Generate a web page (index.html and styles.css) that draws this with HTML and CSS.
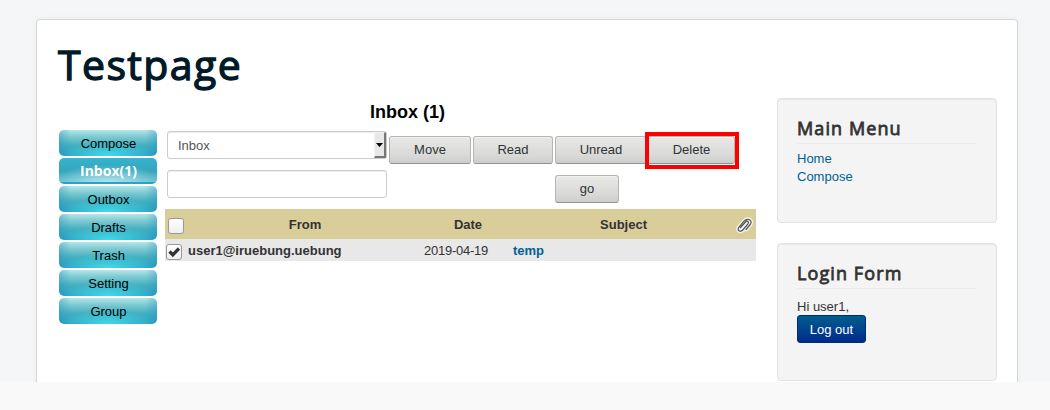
FILE: index.html
```html
<!DOCTYPE html>
<html lang="en">
<head>
<meta charset="utf-8">
<title>Testpage</title>
<link rel="stylesheet" href="styles.css">
</head>
<body>
<div class="viewport">
  <div class="page">
    <h1 class="site-title">Testpage</h1>
    <div class="columns">
      <nav class="folders">
        <a class="folder">Compose</a>
        <a class="folder active">Inbox(1)</a>
        <a class="folder">Outbox</a>
        <a class="folder">Drafts</a>
        <a class="folder">Trash</a>
        <a class="folder">Setting</a>
        <a class="folder">Group</a>
      </nav>
      <main class="mail">
        <h2 class="mail-title">Inbox (1)</h2>
        <div class="toolbar">
          <div class="select">Inbox<span class="arrow"><svg width="7" height="4" viewBox="0 0 7 4"><path d="M0 0h7L3.5 4z"/></svg></span></div>
          <div class="btn move">Move</div>
          <div class="btn read">Read</div>
          <div class="btn unread">Unread</div>
          <div class="btn delete">Delete<span class="marker"></span></div>
        </div>
        <div class="search">
          <div class="input"></div>
          <div class="btn go">go</div>
        </div>
        <div class="row head">
          <span class="check"></span>
          <span class="from">From</span>
          <span class="date">Date</span>
          <span class="subject">Subject</span>
          <svg class="clip" width="19" height="17" viewBox="0 0 19 17" fill="none" stroke-linecap="round" stroke-linejoin="round">
            <path stroke="#f6f4f0" stroke-width="4" d="M5.500 10.500L10.500 5c1.500-1.700 4-.2 2.500 1.800L7.800 13c-2.500 2.500-6.300.3-4-2.700L9 4.200c3.500-3.800 9.300-1.200 6.200 3.300L11 12.500"/>
            <path stroke="#505050" stroke-width="1.200" d="M5.500 10.500L10.500 5c1.500-1.700 4-.2 2.500 1.800L7.800 13c-2.500 2.500-6.300.3-4-2.700L9 4.200c3.500-3.800 9.300-1.200 6.200 3.300L11 12.500"/>
          </svg>
        </div>
        <div class="row item">
          <span class="check"><svg width="14" height="14" viewBox="0 0 14 14"><path d="M2.500 6.500L5.800 9.800L12 3.500" fill="none" stroke="#2e3436" stroke-width="3.300"/></svg></span>
          <span class="from">user1@iruebung.uebung</span>
          <span class="date">2019-04-19</span>
          <a class="subject">temp</a>
        </div>
      </main>
      <aside class="side">
        <section class="well menu">
          <h3>Main Menu</h3>
          <a>Home</a>
          <a>Compose</a>
        </section>
        <section class="well login">
          <h3>Login Form</h3>
          <p>Hi user1,</p>
          <div class="logout">Log out</div>
        </section>
      </aside>
    </div>
  </div>
</div>
</body>
</html>
```
FILE: styles.css
```css
* { box-sizing: border-box; }
body {
  margin: 0;
  background: #f9f9f9;
  color: #333;
  font: 13px/18px "Liberation Sans", Arial, sans-serif;
}
h1, h2, h3, p { margin: 0; }
.viewport {
  height: 382px;
  overflow: hidden;
  padding: 19px 32px 0 36px;
  background: #f4f6f8;
}
.page {
  height: 400px;
  padding: 20px;
  background: #fff;
  border: 1px solid #d5d7d9;
  border-radius: 4px;
  box-shadow: 0 0 6px rgba(0, 0, 0, .05);
}
.site-title {
  height: 58px;
  padding-left: 1px;
  font: 400 41px/49px "Open Sans", sans-serif;
  letter-spacing: 1.4px;
  -webkit-text-stroke: 1.3px #001a27;
  color: #001a27;
}
.columns { display: flex; }
.folders {
  width: 98px;
  margin: 32px 8px 0 2px;
  display: flex;
  flex-direction: column;
  gap: 2px;
}
.folder {
  height: 26px;
  padding-left: 1px;
  line-height: 27px;
  text-align: center;
  color: #000;
  border-radius: 5px;
  background:
    radial-gradient(ellipse 48px 14px at 50% 100%, rgba(67, 225, 235, .9), rgba(60, 200, 225, 0)),
    linear-gradient(90deg, rgba(30, 140, 190, .35), transparent 12%, transparent 88%, rgba(30, 140, 190, .35)),
    linear-gradient(#b5e6e8 0, #79c8d0 28%, #45b0c0 58%, #2aa0c4 100%);
}
.folder.active {
  color: #fff;
  font: bold 14px/25px "Open Sans", sans-serif;
  background:
    linear-gradient(transparent 94%, #28a4c2 94%),
    radial-gradient(ellipse 62px 19px at 50% 100%, rgba(190, 235, 238, .95), rgba(100, 200, 215, 0)),
    linear-gradient(#36b4cc, #35a5bd 50%, #60bdcd);
}
.mail { width: 591px; margin-right: 21px; }
.mail-title {
  height: 33px;
  padding-right: 106px;
  font: bold 18px/29px "Liberation Sans", Arial, sans-serif;
  text-align: center;
  color: #000;
}
.toolbar { display: flex; height: 39px; padding-left: 2px; gap: 2px; }
.select, .input {
  width: 220px;
  height: 28px;
  border: 1px solid #ccc;
  border-radius: 3px;
  background: #fff;
  box-shadow: inset 0 1px 1px rgba(0, 0, 0, .075);
}
.select {
  display: flex;
  justify-content: space-between;
  padding-left: 10px;
  line-height: 28px;
  color: #555;
}
.arrow {
  display: flex;
  align-items: center;
  justify-content: center;
  width: 12px;
  height: 26px;
  background: #e8e8e8;
  border: solid;
  border-width: 1px 2px 2px 1px;
  border-color: #f4f4f4 #777 #777 #f4f4f4;
}
.btn {
  height: 28px;
  line-height: 26px;
  text-align: center;
  border: 1px solid #b5b5b2;
  border-bottom-color: #92928d;
  border-radius: 3px;
  background: linear-gradient(#e8e8e7, #d9d9d8 70%, #cdcdcc);
  box-shadow: inset 0 1px 0 #f1f1f0;
  color: #2e3436;
}
.toolbar .btn { margin-top: 5px; }
.move { width: 82px; }
.read { width: 80px; }
.unread { width: 92px; }
.toolbar .delete { width: 88px; margin-left: -2px; padding-left: 1px; position: relative; }
.marker {
  position: absolute;
  inset: -5px -5px -6px -3px;
  border: 4px solid #f00;
}
.search { display: flex; height: 39px; padding-left: 2px; }
.go { width: 64px; margin: 5px 0 0 168px; }
.row { display: flex; align-items: center; }
.head { height: 30px; background: #d9cd9a; font-weight: bold; }
.item { height: 22px; background: #e8e8e8; }
.check {
  width: 16px;
  height: 16px;
  border: 1px solid #999;
  border-radius: 3px;
  background: linear-gradient(#fff, #eee);
}
.check svg { display: block; }
.head .check { margin: 4px 0 0 3px; }
.item .check { margin: 4px 0 0 1px; }
.head .from, .head .date, .head .subject { padding-top: 2px; text-align: center; }
.head .from { width: 234px; margin-left: 4px; }
.head .date { width: 92px; }
.head .subject { width: 219px; }
.clip { margin: 3px 0 0 2px; }
.item .from, .item .date, .item .subject { padding-top: 2px; }
.item .from { width: 236px; margin-left: 6px; font-weight: bold; }
.item .date { width: 89px; letter-spacing: -.25px; }
.item .subject { font-weight: bold; color: #006193; }
.side { width: 220px; }
.well {
  border: 1px solid #e3e3e3;
  border-radius: 4px;
  background: #f4f4f4;
  box-shadow: inset 0 1px 1px rgba(0, 0, 0, .05);
  padding: 19px;
}
.menu { height: 125px; margin-bottom: 20px; }
.login { height: 138px; }
.well h3 {
  height: 26px;
  margin-bottom: 6px;
  border-bottom: 1px solid #eaeaea;
  font: 400 18px/20px "Open Sans", sans-serif;
  letter-spacing: 1.1px;
  -webkit-text-stroke: .8px #333;
}
.well a { display: block; color: #006193; }
.login p { padding-top: 3px; }
.logout {
  width: 69px;
  height: 28px;
  margin-top: -1px;
  line-height: 27px;
  text-align: center;
  color: #fff;
  border: 1px solid #002a80;
  border-radius: 3px;
  background: linear-gradient(#005e8d, #002a8c);
}
```
